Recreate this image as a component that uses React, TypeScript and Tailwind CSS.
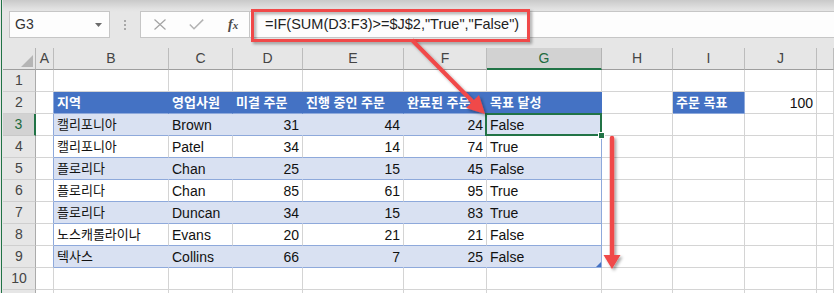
import React from "react";

type V = string | number;

const letters = ["A", "B", "C", "D", "E", "F", "G", "H", "I", "J", "K"];
const header = ["지역", "영업사원", "미결 주문", "진행 중인 주문", "완료된 주문", "목표 달성"];
const data: V[][] = [
  ["캘리포니아", "Brown", 31, 44, 24, "False"],
  ["캘리포니아", "Patel", 34, 14, 74, "True"],
  ["플로리다", "Chan", 25, 15, 45, "False"],
  ["플로리다", "Chan", 85, 61, 95, "True"],
  ["플로리다", "Duncan", 34, 15, 83, "True"],
  ["노스캐롤라이나", "Evans", 20, 21, 21, "False"],
  ["텍사스", "Collins", 66, 7, 25, "False"],
];

const isKo = (v: V) => typeof v === "string" && /[가-힣]/.test(v);

function FormulaBar() {
  return (
    <div className="h-[48px] shrink-0 flex items-start pt-[11px] bg-[linear-gradient(to_bottom,#c9c9c9_0px,#e2e2e2_9px,#e6e6e6_12px)]">
      {/* name box */}
      <div className="ml-[6px] w-[101px] h-[27px] bg-[#fdfdfd] border border-[#c6c6c6] flex items-center pl-[5px] pr-[7px] text-[14px] text-[#333]">
        <span className="flex-1">G3</span>
        <svg width="7" height="4" viewBox="0 0 7 4">
          <path d="M0 0h7L3.5 4z" fill="#6b6b6b" />
        </svg>
      </div>
      <div className="w-[30px] h-[27px] flex flex-col items-center justify-center gap-[2px]">
        <span className="w-[2px] h-[2px] bg-[#a8a8a8]" />
        <span className="w-[2px] h-[2px] bg-[#a8a8a8]" />
        <span className="w-[2px] h-[2px] bg-[#a8a8a8]" />
      </div>
      {/* cancel / enter / fx */}
      <div className="w-[110px] h-[27px] bg-[#fdfdfd] border border-[#c6c6c6] flex items-center pl-[13px]">
        <svg width="12" height="11" viewBox="0 0 12 11">
          <path d="M0.5 0.5L11.5 10.5M11.5 0.5L0.5 10.5" stroke="#a3a3a3" strokeWidth="1.2" fill="none" />
        </svg>
        <svg className="ml-[23px]" width="15" height="11" viewBox="0 0 15 11">
          <path d="M0.8 5.5L5 9.8L14.2 0.6" stroke="#b3b3b3" strokeWidth="1.5" fill="none" />
        </svg>
        <span className="ml-[24px] font-['Liberation_Serif',serif] italic font-bold text-[14px] text-[#4a4a4a] leading-none">
          f<span className="text-[11px]">x</span>
        </span>
      </div>
      {/* formula */}
      <div className="flex-1 h-[27px] bg-[#fdfdfd] border-y border-[#c6c6c6] flex items-center pl-[15px] text-[14.5px] text-[#222] whitespace-nowrap">
        {'=IF(SUM(D3:F3)>=$J$2,"True","False")'}
      </div>
    </div>
  );
}

function Corner() {
  return (
    <div className="relative bg-[#e6e6e6] border-r border-b border-r-[#b4b4b4] border-b-[#9e9e9e]">
      <svg className="absolute left-0 top-0" width="33" height="22" viewBox="0 0 33 22">
        <path d="M30 7V19H18z" fill="#b5b5b5" />
      </svg>
    </div>
  );
}

function ColHead({ l }: { l: string }) {
  if (l === "G") {
    return (
      <div className="flex items-center justify-center bg-[#d2d2d2] border-r border-r-[#b4b4b4] border-b-2 border-b-[#217346] text-[14px] text-[#1f6b40]">
        {l}
      </div>
    );
  }
  return (
    <div className="flex items-center justify-center bg-[#e6e6e6] border-r border-b border-r-[#bcbcbc] border-b-[#9e9e9e] text-[14px] text-[#444]">
      {/* K is only a sliver at the window edge */}
      {l === "K" ? null : l}
    </div>
  );
}

function RowHead({ r }: { r: number }) {
  if (r === 3) {
    return (
      <div className="flex items-center justify-center bg-[#d2d2d2] border-r-2 border-b border-r-[#217346] border-b-[#c8c8c8] text-[14px] text-[#1f6b40]">
        {r}
      </div>
    );
  }
  return (
    <div className="flex items-center justify-center bg-[#e6e6e6] border-r border-b border-r-[#ababab] border-b-[#cfcfcf] text-[14px] text-[#444]">
      {r <= 10 ? r : null}
    </div>
  );
}

function SheetCell({ r, c }: { r: number; c: number }) {
  let cls = "border-r border-b border-r-[#d4d4d4] border-b-[#d4d4d4] bg-white";
  let v: V | null = null;
  let right = false;

  if (r >= 2 && r <= 9 && c >= 1 && c <= 6) {
    const last = c === 6;
    if (r === 2) {
      cls = "border-r border-b border-r-[#4472c4] border-b-[#8ea9db] bg-[#4472c4] text-white font-bold";
      v = header[c - 1];
    } else {
      const banded = r % 2 === 1;
      if (banded) {
        cls = last
          ? "border-r border-b border-r-[#8ea9db] border-b-[#8ea9db] bg-[#d9e1f2]"
          : "border-r border-b border-r-[#d9e1f2] border-b-[#8ea9db] bg-[#d9e1f2]";
      } else {
        cls = last
          ? "border-r border-b border-r-[#8ea9db] border-b-[#8ea9db] bg-white"
          : "border-r border-b border-r-[#d4d4d4] border-b-[#8ea9db] bg-white";
      }
      v = data[r - 3][c - 1];
      right = typeof v === "number";
    }
  } else if (c === 0 && r >= 2 && r <= 9) {
    cls = "border-r border-b border-r-[#8ea9db] border-b-[#d4d4d4] bg-white";
  } else if (r === 2 && c === 8) {
    cls = "border-r border-b border-r-[#8ea9db] border-b-[#8ea9db] bg-[#4472c4] text-white font-bold";
    v = "주문 목표";
  } else if (r === 2 && c === 9) {
    v = 100;
    right = true;
  }

  return (
    <div
      className={`relative flex items-center px-[3px] pt-px whitespace-nowrap overflow-visible ${cls} ${
        right ? "justify-end" : "justify-start"
      } ${v !== null && isKo(v) ? "text-[13px]" : "text-[14px]"}`}
    >
      {v}
      {r === 3 && c === 6 && (
        <div className="absolute left-[-2px] top-[-1px] right-[-1px] bottom-[-1px] border-2 border-[#217346] z-10">
          <div className="absolute right-[-5px] bottom-[-5px] w-[7px] h-[7px] bg-[#217346] border border-white" />
        </div>
      )}
      {r === 9 && c === 6 && (
        <svg className="absolute right-0 bottom-0" width="5" height="5" viewBox="0 0 5 5">
          <path d="M5 0V5H0z" fill="#4472c4" />
        </svg>
      )}
    </div>
  );
}

function Sheet() {
  const rows = Array.from({ length: 11 }, (_, i) => i + 1);
  return (
    <div className="grid grid-cols-[33px_18px_115px_64px_70px_101px_83px_115px_71px_72px_72px_17px] auto-rows-[22px] text-[#111]">
      <Corner />
      {letters.map((l) => (
        <ColHead key={l} l={l} />
      ))}
      {rows.map((r) => (
        <React.Fragment key={r}>
          <RowHead r={r} />
          {letters.map((l, c) => (
            <SheetCell key={l} r={r} c={c} />
          ))}
        </React.Fragment>
      ))}
    </div>
  );
}

function Annotations() {
  return (
    <svg className="absolute left-0 top-0 pointer-events-none z-20" width="834" height="293" viewBox="0 0 834 293">
      <defs>
        <filter id="sh" filterUnits="userSpaceOnUse" x="0" y="0" width="834" height="293">
          <feDropShadow dx="2" dy="2" stdDeviation="1.6" floodColor="#000" floodOpacity="0.35" />
        </filter>
      </defs>
      <rect x="252.5" y="10.5" width="276" height="30" fill="none" stroke="#f04848" strokeWidth="3" filter="url(#sh)" />
      <g filter="url(#sh)">
        <line x1="412" y1="40" x2="474" y2="103" stroke="#f04848" strokeWidth="4" />
        <polygon points="485,114 479,95 466,108" fill="#f04848" />
        <line x1="612" y1="138" x2="612" y2="257" stroke="#f04848" strokeWidth="4.5" strokeLinecap="round" />
        <polygon points="603.5,255 620.5,255 612,269" fill="#f04848" />
      </g>
    </svg>
  );
}

export default function App() {
  return (
    <div className="relative w-[834px] h-[293px] overflow-hidden bg-white flex font-['Liberation_Sans','Noto_Sans_CJK_KR',sans-serif]">
      <div className="w-[3px] shrink-0 bg-[#e6e6e6] flex">
        <div className="ml-px w-px bg-[#217346]" />
      </div>
      <div className="flex-1 flex flex-col min-w-0">
        <FormulaBar />
        <Sheet />
      </div>
      <Annotations />
    </div>
  );
}
